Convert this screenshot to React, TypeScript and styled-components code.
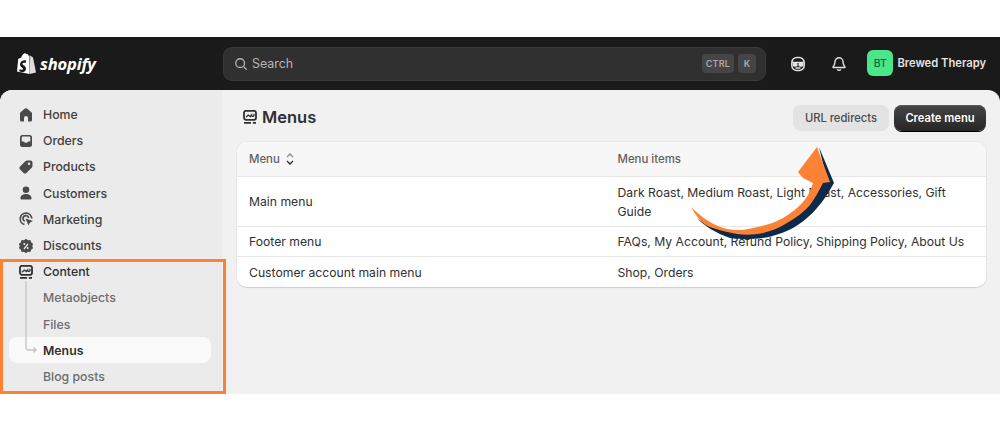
import React from "react";
import styled, { createGlobalStyle } from "styled-components";

const Global = createGlobalStyle`
  html, body { margin: 0; padding: 0; background: #fff; }
  body { font-family: Inter, "Liberation Sans", sans-serif; color: #303030; }
  #root { width: 1000px; height: 432px; overflow: hidden; }
`;

const Canvas = styled.div`
  position: relative;
  width: 1000px;
  height: 432px;
  padding-top: 37px;
  box-sizing: border-box;
  background: #fff;
`;
const Shell = styled.div`
  height: 357px;
  background: #1a1a1a;
  display: flex;
  flex-direction: column;
`;
const TopBar = styled.header`
  height: 53px;
  flex: none;
  display: flex;
  align-items: center;
  padding: 0 14px 0 17px;
`;
const Logo = styled.div`
  width: 206px;
  flex: none;
  display: flex;
  align-items: center;
  gap: 4px;
  color: #fff;
`;
const LogoWord = styled.span`
  font: italic 700 16.6px "Open Sans", sans-serif;
  letter-spacing: -0.2px;
`;
const Search = styled.div`
  width: 543px;
  height: 34px;
  box-sizing: border-box;
  flex: none;
  display: flex;
  align-items: center;
  gap: 4px;
  padding: 0 9px 0 10px;
  border-radius: 9px;
  background: #303030;
  border: 1px solid #3a3a3a;
  color: #b5b5b5;
  font-size: 12.4px;
`;
const SearchText = styled.span`
  flex: 1;
`;
const Key = styled.span`
  height: 19px;
  min-width: 18px;
  box-sizing: border-box;
  padding: 0 4px;
  display: flex;
  align-items: center;
  justify-content: center;
  border-radius: 4px;
  background: #454545;
  color: #a8a8a8;
  font-size: 9px;
  font-weight: 600;
  letter-spacing: 0.2px;
`;
const TopIcons = styled.div`
  margin-left: 24px;
  display: flex;
  align-items: center;
  gap: 25px;
  color: #e3e3e3;
`;
const Store = styled.div`
  margin-left: auto;
  display: flex;
  align-items: center;
  gap: 4px;
  padding-bottom: 1px;
  color: #e3e3e3;
  font-size: 11.2px;
  font-weight: 600;
  white-space: nowrap;
`;
const Avatar = styled.span`
  width: 26px;
  height: 26px;
  border-radius: 6px;
  background: #4be58a;
  color: #14663a;
  font-size: 10.5px;
  font-weight: 500;
  display: flex;
  align-items: center;
  justify-content: center;
`;
const Body = styled.div`
  flex: 1;
  display: flex;
  border-radius: 12px 12px 0 0;
  overflow: hidden;
  background: #f1f1f1;
`;
const Sidebar = styled.nav`
  width: 222px;
  flex: none;
  box-sizing: border-box;
  background: #ebebeb;
  padding: 11.5px 11px 0 9px;
  display: flex;
  flex-direction: column;
`;
const NavItem = styled.div<{ $active?: boolean; $sub?: boolean; $strong?: boolean }>`
  position: relative;
  height: 26.2px;
  flex: none;
  display: flex;
  align-items: center;
  gap: 10px;
  padding-left: 10px;
  border-radius: 8px;
  font-size: 12.3px;
  font-weight: ${(p) => (p.$active ? 600 : 500)};
  color: ${(p) => (p.$active || p.$strong ? "#303030" : p.$sub ? "#6d6d6d" : "#404040")};
  background: ${(p) => (p.$active ? "#fafafa" : "transparent")};
`;
const SubLabel = styled.span`
  margin-left: 24px;
`;
const IconSlot = styled.span<{ $dark?: boolean }>`
  width: 14px;
  height: 14px;
  flex: none;
  display: flex;
  color: ${(p) => (p.$dark ? "#303030" : "#4a4a4a")};
`;
const Main = styled.main`
  flex: 1;
  padding: 0 14px 0 15px;
  display: flex;
  flex-direction: column;
`;
const PageHead = styled.div`
  height: 52px;
  flex: none;
  display: flex;
  align-items: center;
  gap: 4px;
  padding: 2px 0 0 6px;
  box-sizing: border-box;
`;
const Title = styled.h1`
  margin: 0 0 0 1px;
  flex: 1;
  font-size: 16.5px;
  font-weight: 600;
  color: #303030;
`;
const Actions = styled.div`
  display: flex;
  gap: 5px;
  margin-top: 2px;
`;
const SecondaryButton = styled.button`
  height: 26px;
  width: 96px;
  border: 0;
  border-radius: 8px;
  background: #e3e3e3;
  color: #4a4a4a;
  font: 500 11.2px Inter, sans-serif;
`;
const PrimaryButton = styled.button`
  height: 26px;
  width: 92px;
  border: 0;
  border-radius: 8px;
  background: linear-gradient(#454545, #262626);
  box-shadow: 0 1px 0 #000, inset 0 1px 0 #5a5a5a;
  color: #fff;
  font: 600 11.2px Inter, sans-serif;
`;
const Card = styled.section`
  background: #fff;
  border-radius: 10px;
  box-shadow: 0 1px 1px rgba(0, 0, 0, 0.12), 0 0 0 1px rgba(0, 0, 0, 0.03);
  overflow: hidden;
`;
const Row = styled.div<{ $head?: boolean; $h: number }>`
  height: ${(p) => p.$h}px;
  box-sizing: border-box;
  display: grid;
  grid-template-columns: 368.500px 1fr;
  align-items: center;
  padding: 0 12px;
  font-size: 12.200px;
  line-height: 19px;
  color: ${(p) => (p.$head ? "#616161" : "#303030")};
  font-weight: ${(p) => (p.$head ? 500 : 400)};
  background: ${(p) => (p.$head ? "#f7f7f7" : "#fff")};
  border-top: ${(p) => (p.$head ? "0" : "1px solid #e6e6e6")};
  ${(p) => p.$head && "font-size: 11.4px;"}
`;
const HeadCell = styled.span`
  display: flex;
  align-items: center;
  gap: 4px;
`;
const Items = styled.span`
  padding-right: 6px;
`;
const Frame = styled.div`
  position: absolute;
  left: 0;
  top: 259px;
  width: 226px;
  height: 135px;
  box-sizing: border-box;
  border: 3px solid #fd8236;
  pointer-events: none;
`;
const Arrow = styled.svg`
  position: absolute;
  left: 680px;
  top: 135px;
  pointer-events: none;
`;
const TreeLine = styled.svg`
  position: absolute;
  left: 15.500px;
  top: -64px;
`;

const Glyph = ({ d, size = 14 }: { d: string; size?: number }) => (
  <svg width={size} height={size} viewBox="1 1 14 14" fill="currentColor"><path d={d} fillRule="evenodd" /></svg>
);

const ContentIcon = ({ size = 14 }: { size?: number }) => (
  <svg width={size} height={size} viewBox="1 1 14 14" fill="none" stroke="currentColor">
    <rect x="2" y="1.800" width="12" height="9" rx="2" strokeWidth="1.800" />
    <path d="M4 8.300l2.300-2.300 2 1.500 1.200-1.500a1.300 1.300 0 1 0 2-1" strokeWidth="1.300" />
    <path d="M2 13.800h7M10.800 13.800h3.200" strokeWidth="1.800" />
  </svg>
);

const icons: Record<string, React.ReactNode> = {
  Home: <Glyph d="M7 1.600a1.600 1.600 0 0 1 2 0l4.400 3.600c.4.3.6.8.6 1.300V13a1.500 1.500 0 0 1-1.500 1.500H10V11a2 2 0 0 0-4 0v3.500H3.500A1.500 1.500 0 0 1 2 13V6.500c0-.5.2-1 .6-1.300z" />,
  Orders: <Glyph d="M4.500 2h7A2.500 2.500 0 0 1 14 4.500v7a2.500 2.500 0 0 1-2.500 2.500h-7A2.500 2.500 0 0 1 2 11.500v-7A2.500 2.500 0 0 1 4.500 2zM3.700 8.500h2.300l1 1.300h2l1-1.300h2.300V4.500a1 1 0 0 0-1-.9h-6.600a1 1 0 0 0-1 .9z" />,
  Products: <Glyph d="M9 1.500h3.500A2 2 0 0 1 14.500 3.500V7a2 2 0 0 1-.6 1.400l-5.500 5.500a2 2 0 0 1-2.800 0L2.100 10.400a2 2 0 0 1 0-2.800l5.500-5.500A2 2 0 0 1 9 1.500zM11 6a1.200 1.200 0 1 0 0-2.400A1.200 1.200 0 0 0 11 6z" />,
  Customers: <Glyph d="M8 1.500a3.300 3.300 0 1 1 0 6.600 3.300 3.300 0 0 1 0-6.600zM8 9c3.300 0 5.500 1.700 5.500 4v.5a1 1 0 0 1-1 1h-9a1 1 0 0 1-1-1V13c0-2.300 2.200-4 5.500-4z" />,
  Marketing: (
    <svg width="14" height="14" viewBox="1 1 14 14" fill="none" stroke="currentColor" strokeWidth="1.700">
      <path d="M6.500 13.500A5.800 5.800 0 1 1 13.800 7.500" />
      <path d="M6.800 10.200A2.900 2.900 0 1 1 10.700 7" />
      <path d="M7.500 7.500l7.500 2.500-3 1.500-1.500 3z" fill="currentColor" stroke="none" />
    </svg>
  ),
  Discounts: <Glyph d="M8 .8l2 1.400 2.400-.2.7 2.300 2 1.400-.8 2.300.8 2.300-2 1.400-.7 2.300-2.400-.2-2 1.400-2-1.400-2.400.2-.7-2.300-2-1.400.8-2.300-.8-2.300 2-1.400.7-2.300 2.400.2zM6.300 7a1 1 0 1 0 0-2 1 1 0 0 0 0 2zM9.700 11a1 1 0 1 0 0-2 1 1 0 0 0 0 2zM5.500 10.500l.9.900 4-4.900-.9-.9z" />,
};

const App = () => (
  <>
    <Global />
    <Canvas>
      <Shell>
        <TopBar>
          <Logo>
            <svg width="19" height="22" viewBox="0 0 19 22">
              <path fill="#fff" d="M12.500 2.500L11.700 2.700C11.200 1.300 10.400.8 9.500.9 8.900.2 8 0 7.200.4 5.500 1.200 4.600 3.200 4.200 4.700L2 5.400C1.300 5.600 1.300 5.600 1.200 6.300L0 18.500 12.500 21z" />
              <path fill="#dcdcdc" d="M13.200 2.500L12.500 21 19 19.500 16 4.500z" />
              <path fill="#1a1a1a" d="M9.200 7.800l-.6 2.200s-.8-.4-1.700-.3c-1.400.1-1.400 1-1.400 1.200.1 1.200 3.300 1.500 3.500 4.400.1 2.300-1.200 3.800-3.200 3.900-2.300.1-3.600-1.200-3.600-1.200l.5-2.100s1.300 1 2.300.9c.7 0 .9-.6.900-.9-.1-1.600-2.700-1.500-2.900-4.100-.1-2.200 1.300-4.400 4.500-4.600 1.200 0 1.700.6 1.700.6z" />
            </svg>
            <LogoWord>shopify</LogoWord>
          </Logo>
          <Search>
            <svg width="14" height="14" viewBox="0 0 16 16" fill="none" stroke="currentColor" strokeWidth="1.500"><circle cx="7" cy="7" r="5" /><path d="M11 11l3.500 3.500" /></svg>
            <SearchText>Search</SearchText>
            <Key>CTRL</Key>
            <Key>K</Key>
          </Search>
          <TopIcons>
            <svg width="16" height="16" viewBox="0 0 16 16" fill="none" stroke="currentColor" strokeWidth="1.500">
              <rect x="1.800" y="1.500" width="12.400" height="13" rx="5" />
              <path d="M2 6.500h12" />
              <rect x="3.300" y="7.500" width="3.600" height="2.400" rx="1" fill="currentColor" />
              <rect x="9.100" y="7.500" width="3.600" height="2.400" rx="1" fill="currentColor" />
              <path d="M5.500 12h5" />
            </svg>
            <svg width="16" height="16" viewBox="0 0 16 16" fill="none" stroke="currentColor" strokeWidth="1.400" strokeLinejoin="round">
              <path d="M8 1.800a4 4 0 0 0-4 4c0 3-1.700 4.500-2 5.700h12c-.3-1.200-2-2.700-2-5.700a4 4 0 0 0-4-4z" />
              <path d="M6.300 13.200a1.800 1.800 0 0 0 3.400 0" />
            </svg>
          </TopIcons>
          <Store>
            <Avatar>BT</Avatar>
            Brewed Therapy
          </Store>
        </TopBar>
        <Body>
          <Sidebar>
            {Object.keys(icons).map((k) => (
              <NavItem key={k}>
                <IconSlot>{icons[k]}</IconSlot>
                {k}
              </NavItem>
            ))}
            <NavItem $strong>
              <IconSlot $dark><ContentIcon /></IconSlot>
              Content
            </NavItem>
            <NavItem $sub><SubLabel>Metaobjects</SubLabel></NavItem>
            <NavItem $sub><SubLabel>Files</SubLabel></NavItem>
            <NavItem $active>
              <TreeLine width="24" height="80" viewBox="0 0 24 80" fill="none" stroke="#c4c4c4" strokeWidth="1.300">
                <path d="M1 8V74a3 3 0 0 0 3 3H11M8.500 74.500L11 77l-2.500 2.500" />
              </TreeLine>
              <SubLabel>Menus</SubLabel>
            </NavItem>
            <NavItem $sub><SubLabel>Blog posts</SubLabel></NavItem>
          </Sidebar>
          <Main>
            <PageHead>
              <IconSlot $dark><ContentIcon size={14} /></IconSlot>
              <Title>Menus</Title>
              <Actions>
                <SecondaryButton>URL redirects</SecondaryButton>
                <PrimaryButton>Create menu</PrimaryButton>
              </Actions>
            </PageHead>
            <Card>
              <Row $head $h={34}>
                <HeadCell>
                  Menu
                  <svg width="12" height="14" viewBox="0 0 12 14" fill="none" strokeWidth="1.400">
                    <path d="M3 5l3-3 3 3" stroke="#8a8a8a" />
                    <path d="M3 9l3 3 3-3" stroke="#303030" />
                  </svg>
                </HeadCell>
                <span>Menu items</span>
              </Row>
              <Row $h={50}>
                <span>Main menu</span>
                <Items>Dark Roast, Medium Roast, Light Roast, Accessories, Gift Guide</Items>
              </Row>
              <Row $h={30}>
                <span>Footer menu</span>
                <Items>FAQs, My Account, Refund Policy, Shipping Policy, About Us</Items>
              </Row>
              <Row $h={31}>
                <span>Customer account main menu</span>
                <Items>Shop, Orders</Items>
              </Row>
            </Card>
          </Main>
        </Body>
      </Shell>
      <Frame />
      <Arrow width="170" height="110" viewBox="680 135 170 110">
        <path fill="#0d2a4a" d="M697 218C706 226 720 231 737 232C760 233 790 220 808 200C815 192 820 186 822 182L826 176L819 147L834 183C829 192 824 200 817 208C810 216 803 222 793 228C785 232 775 236 763 238C754 239 742 240 730 238C716 233 704 226 697 218Z" />
        <path fill="#fd8236" d="M691 207C703 219 715 226 727 229C736 231 745 230 753 228C764 226 774 223 783 218C791 213 798 208 803 202C808 196 811 190 813 183L803 178L798 172L817 147L830 182L823 183C819 191 815 198 810 205C804 212 796 218 787 223C779 228 771 231 763 233C754 235 745 235 737 234C727 232 718 230 710 227C702 224 696 216 691 207Z" />
      </Arrow>
    </Canvas>
  </>
);

export default App;
